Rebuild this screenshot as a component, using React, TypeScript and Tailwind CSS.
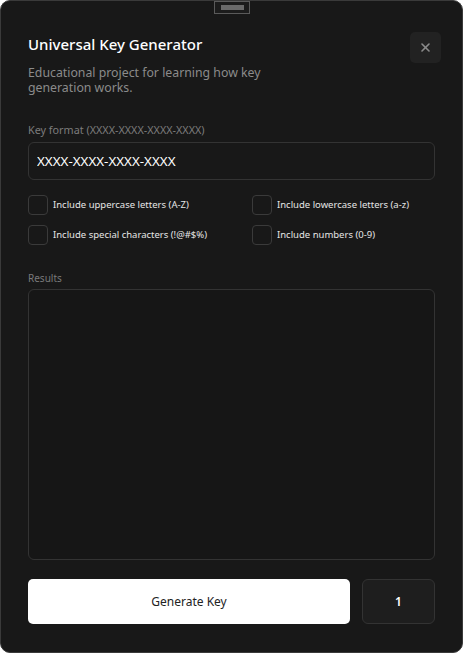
import React, { useState } from 'react';

const options = [
  { id: 'upper', label: 'Include uppercase letters (A-Z)' },
  { id: 'lower', label: 'Include lowercase letters (a-z)' },
  { id: 'special', label: 'Include special characters (!@#$%)' },
  { id: 'numbers', label: 'Include numbers (0-9)' },
];

const App: React.FC = () => {
  const [format, setFormat] = useState('XXXX-XXXX-XXXX-XXXX');
  const [checked, setChecked] = useState<Record<string, boolean>>({});
  const [count] = useState(1);

  return (
    <div className="bg-white w-[463px] h-[653px]" style={{ fontFamily: '"Noto Sans", "Open Sans", sans-serif' }}>
      <div className="relative w-full h-full rounded-[10px] border border-[#3a3a3a] bg-[#181818] flex flex-col px-[27px] pt-[30px] pb-[28px]">
        {/* drag handle */}
        <div className="absolute top-0 left-[213px] w-[36px] h-[13px] border border-[#5a5a5a] bg-[#1c1c1c] flex items-center justify-center">
          <div className="w-[23px] h-[5px] bg-[#6a6a6a]" />
        </div>

        <div className="flex items-start justify-between">
          <div>
            <h1 className="text-[15px] leading-[20px] text-white font-medium mt-[3px]">Universal Key Generator</h1>
            <p className="mt-[11px] text-[12.3px] leading-[15px] text-[#8b8b8b] w-[240px]">
              Educational project for learning how key generation works.
            </p>
          </div>
          <button className="w-[31px] h-[31px] mt-[1px] mr-[-6px] rounded-[5px] bg-[#222222] text-[#8a8a8a] flex items-center justify-center">
            <svg width="9" height="9" viewBox="0 0 9 9" stroke="currentColor" strokeWidth="1.6" strokeLinecap="round">
              <line x1="1" y1="1" x2="8" y2="8" />
              <line x1="8" y1="1" x2="1" y2="8" />
            </svg>
          </button>
        </div>

        <label className="mt-[29px] text-[10.8px] leading-[12px] text-[#7c7c7c]">Key format (XXXX-XXXX-XXXX-XXXX)</label>
        <input
          value={format}
          onChange={(e) => setFormat(e.target.value)}
          className="mt-[6px] h-[38px] w-full rounded-[6px] border border-[#333333] bg-[#181818] px-[8px] text-[13.4px] text-white outline-none"
        />

        <div className="mt-[15px] grid grid-cols-[224px_1fr] gap-y-[10px]">
          {options.map((o) => (
            <label key={o.id} className="flex items-center gap-[5px] cursor-pointer">
              <span
                onClick={() => setChecked({ ...checked, [o.id]: !checked[o.id] })}
                className="w-[20px] h-[20px] rounded-[4px] border border-[#3a3a3a] bg-[#181818] shrink-0"
              />
              <span className="text-[9.5px] text-[#e6e6e6]">{o.label}</span>
            </label>
          ))}
        </div>

        <span className="mt-[27px] text-[10px] leading-[12px] text-[#7a7a7a]">Results</span>
        <div className="mt-[5px] flex-1 rounded-[6px] border border-[#333333] bg-[#161616]" />

        <div className="mt-[19px] flex gap-[12px]">
          <button className="flex-1 h-[45px] rounded-[5px] bg-white text-[12px] text-[#222222]">Generate Key</button>
          <div className="w-[73px] h-[45px] rounded-[6px] border border-[#333333] bg-[#1e1e1e] flex items-center justify-center text-[12px] font-semibold text-white">
            {count}
          </div>
        </div>
      </div>
    </div>
  );
};

export default App;
